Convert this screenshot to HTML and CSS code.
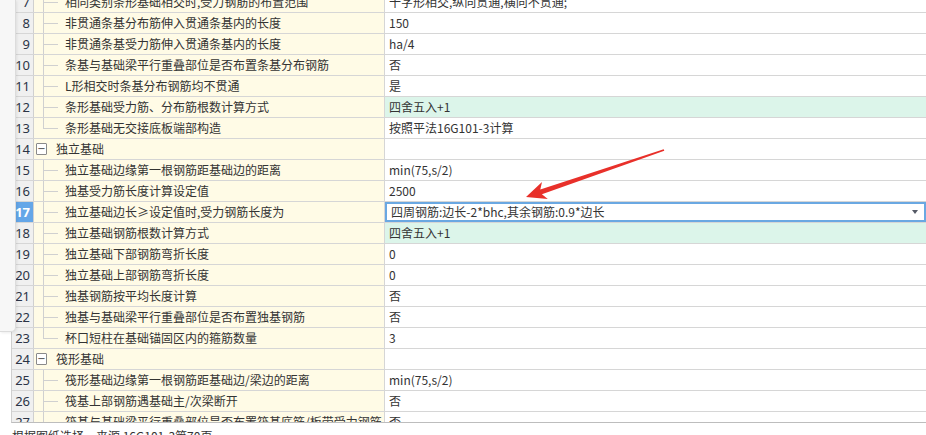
FILE: index.html
```html
<!DOCTYPE html>
<html lang="zh">
<head>
<meta charset="utf-8">
<title>计算设置</title>
<link rel="stylesheet" href="styles.css">
</head>
<body>
<div class="page">
  <div class="grid-wrap">
    <div class="grid">
      <div class="row"><div class="num">7</div><div class="name"><span class="tree"></span><span class="label">相同类别条形基础相交时,受力钢筋的布置范围</span></div><div class="val">十字形相交,纵向贯通,横向不贯通;</div></div>
      <div class="row"><div class="num">8</div><div class="name"><span class="tree"></span><span class="label">非贯通条基分布筋伸入贯通条基内的长度</span></div><div class="val">150</div></div>
      <div class="row"><div class="num">9</div><div class="name"><span class="tree"></span><span class="label">非贯通条基受力筋伸入贯通条基内的长度</span></div><div class="val">ha/4</div></div>
      <div class="row"><div class="num">10</div><div class="name"><span class="tree"></span><span class="label">条基与基础梁平行重叠部位是否布置条基分布钢筋</span></div><div class="val">否</div></div>
      <div class="row"><div class="num">11</div><div class="name"><span class="tree"></span><span class="label">L形相交时条基分布钢筋均不贯通</span></div><div class="val">是</div></div>
      <div class="row"><div class="num">12</div><div class="name"><span class="tree"></span><span class="label">条形基础受力筋、分布筋根数计算方式</span></div><div class="val green">四舍五入+1</div></div>
      <div class="row"><div class="num">13</div><div class="name"><span class="tree last"></span><span class="label">条形基础无交接底板端部构造</span></div><div class="val">按照平法16G101-3计算</div></div>
      <div class="row"><div class="num">14</div><div class="name group"><span class="toggle">−</span><span class="label">独立基础</span></div><div class="val"></div></div>
      <div class="row"><div class="num">15</div><div class="name"><span class="tree"></span><span class="label">独立基础边缘第一根钢筋距基础边的距离</span></div><div class="val">min(75,s/2)</div></div>
      <div class="row"><div class="num">16</div><div class="name"><span class="tree"></span><span class="label">独基受力筋长度计算设定值</span></div><div class="val">2500</div></div>
      <div class="row selected"><div class="num">17</div><div class="name"><span class="tree"></span><span class="label">独立基础边长≥设定值时,受力钢筋长度为</span></div><div class="val editing"><span class="edit-text">四周钢筋:边长-2*bhc,其余钢筋:0.9*边长</span><span class="caret"></span></div></div>
      <div class="row"><div class="num">18</div><div class="name"><span class="tree"></span><span class="label">独立基础钢筋根数计算方式</span></div><div class="val green">四舍五入+1</div></div>
      <div class="row"><div class="num">19</div><div class="name"><span class="tree"></span><span class="label">独立基础下部钢筋弯折长度</span></div><div class="val">0</div></div>
      <div class="row"><div class="num">20</div><div class="name"><span class="tree"></span><span class="label">独立基础上部钢筋弯折长度</span></div><div class="val">0</div></div>
      <div class="row"><div class="num">21</div><div class="name"><span class="tree"></span><span class="label">独基钢筋按平均长度计算</span></div><div class="val">否</div></div>
      <div class="row"><div class="num">22</div><div class="name"><span class="tree"></span><span class="label">独基与基础梁平行重叠部位是否布置独基钢筋</span></div><div class="val">否</div></div>
      <div class="row"><div class="num">23</div><div class="name"><span class="tree last"></span><span class="label">杯口短柱在基础锚固区内的箍筋数量</span></div><div class="val">3</div></div>
      <div class="row"><div class="num">24</div><div class="name group"><span class="toggle">−</span><span class="label">筏形基础</span></div><div class="val"></div></div>
      <div class="row"><div class="num">25</div><div class="name"><span class="tree"></span><span class="label">筏形基础边缘第一根钢筋距基础边/梁边的距离</span></div><div class="val">min(75,s/2)</div></div>
      <div class="row"><div class="num">26</div><div class="name"><span class="tree"></span><span class="label">筏基上部钢筋遇基础主/次梁断开</span></div><div class="val">否</div></div>
      <div class="row"><div class="num">27</div><div class="name"><span class="tree"></span><span class="label">筏基与基础梁平行重叠部位是否布置筏基底筋/板带受力钢筋</span></div><div class="val">否</div></div>
    </div>
    <svg class="arrow" width="926" height="435" viewBox="0 0 926 435" aria-hidden="true">
      <polygon points="526,197 547.8,199 541.9,194.2 664.3,150.7 663.7,149.3 540.3,189.4 542,182" fill="#e8302a"/>
    </svg>
  </div>
  <div class="side-panel"></div>
  <div class="footer">根据图纸选择，来源 16G101-3第70页</div>
</div>
</body>
</html>
```

FILE: styles.css
```css
html, body {
  margin: 0;
  padding: 0;
  background: #ffffff;
}

body {
  font-family: "Noto Sans CJK SC", "Microsoft YaHei", sans-serif;
  font-size: 12px;
  color: #333333;
  width: 926px;
  height: 435px;
  overflow: hidden;
}

.page {
  position: relative;
  width: 926px;
  height: 435px;
  overflow: hidden;
}

.grid-wrap {
  position: relative;
  height: 422px;
  margin-left: 11px;
  overflow: hidden;
  border-left: 1px solid #cfcfcf;
  border-bottom: 1px solid #bdbdbd;
}

.grid {
  display: flex;
  flex-direction: column;
  margin-top: -8px;
}

.row {
  display: grid;
  grid-template-columns: 22px 351px 1fr;
  height: 21px;
  box-sizing: border-box;
  border-bottom: 1px solid #d6d6d6;
}

.num {
  background: #f0f0f0;
  border-right: 1px solid #d0d0d0;
  font-family: "Noto Sans", "Liberation Sans", sans-serif;
  font-size: 13px;
  line-height: 20px;
  text-align: right;
  padding-right: 3px;
  color: #2b3446;
}

.row.selected .num {
  background: #64a6e8;
  color: #ffffff;
  font-weight: bold;
}

.name {
  display: flex;
  align-items: stretch;
  background: #fffbe6;
  border-right: 1px solid #d6d6d6;
  line-height: 20px;
  white-space: nowrap;
  overflow: hidden;
}

.tree {
  flex: none;
  width: 31px;
  background-image:
    linear-gradient(#d0d0d0, #d0d0d0),
    linear-gradient(#d0d0d0, #d0d0d0);
  background-repeat: no-repeat;
  background-size: 1px 100%, 15px 1px;
  background-position: 9px 0, 9px 10px;
}

.tree.last {
  background-size: 1px 11px, 15px 1px;
}

.label {
  display: block;
}

.name.group .toggle {
  flex: none;
  width: 9px;
  height: 10px;
  margin: 4px 9px 0 2px;
  border: 1px solid #8a8a8a;
  border-radius: 1px;
  font-family: "DejaVu Sans", sans-serif;
  font-size: 10px;
  line-height: 9px;
  text-align: center;
  color: #444;
  background: #ffffff;
}

.val {
  background: #ffffff;
  padding-left: 4px;
  line-height: 20px;
  white-space: nowrap;
  overflow: hidden;
}

.val.green {
  background: #dcf5ea;
}

.val.editing {
  display: flex;
  align-items: center;
  justify-content: space-between;
  border: 2px solid #6aa8e2;
  padding-left: 4px;
  padding-right: 6px;
  line-height: 16px;
}

.caret {
  width: 0;
  height: 0;
  border-left: 3px solid transparent;
  border-right: 3px solid transparent;
  border-top: 4px solid #555a66;
}

.arrow {
  position: absolute;
  left: -12px;
  top: 0;
  pointer-events: none;
}

.side-panel {
  position: absolute;
  left: 0;
  top: 0;
  width: 15px;
  height: 331px;
  background: #f7f7f7;
  border-right: 1px solid #dcdcdc;
  border-bottom: 1px solid #dcdcdc;
  border-bottom-right-radius: 5px;
  box-shadow: 1px 1px 3px rgba(0, 0, 0, 0.08);
}

.footer {
  padding: 5px 0 0 12px;
  line-height: 16px;
  color: #333333;
  white-space: nowrap;
}
```
